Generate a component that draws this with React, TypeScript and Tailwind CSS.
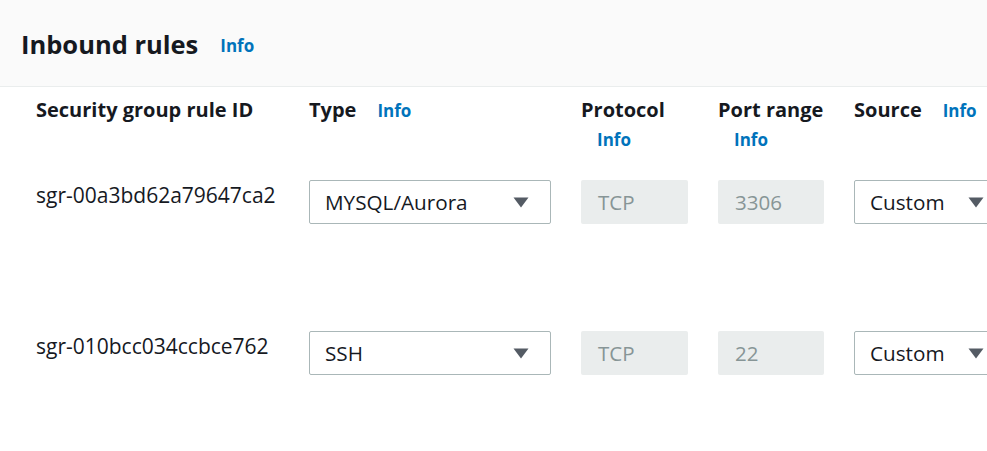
const rules = [
  { id: 'sgr-00a3bd62a79647ca2', type: 'MYSQL/Aurora', protocol: 'TCP', port: '3306', source: 'Custom' },
  { id: 'sgr-010bcc034ccbce762', type: 'SSH', protocol: 'TCP', port: '22', source: 'Custom' },
]

function Caret() {
  return (
    <svg width="16" height="11" viewBox="0 0 16 11" className="shrink-0">
      <path d="M0.5 0.5 L15.5 0.5 L8 10.5 Z" fill="#545b64" />
    </svg>
  )
}

function Info() {
  return <span className="pl-4 text-[17px] font-bold text-[#0073bb]">Info</span>
}

function Select({ value, width }: { value: string; width: string }) {
  return (
    <div className={`flex h-[44px] ${width} shrink-0 items-center justify-between rounded-[2px] border border-[#aab7b8] bg-white pl-[15px] pr-[21px] text-[20.7px]`}>
      <span>{value}</span>
      <Caret />
    </div>
  )
}

function Disabled({ value }: { value: string }) {
  return (
    <div className="flex h-[44px] items-center rounded-[2px] bg-[#eaeded] pl-[17px] text-[20.5px] text-[#879596]">
      {value}
    </div>
  )
}

export default function App() {
  return (
    <div
      className="h-[451px] w-[987px] overflow-hidden bg-white text-[20px] text-[#16191f]"
      style={{ fontFamily: '"Open Sans", "Noto Sans", Arial, sans-serif' }}
    >
      <header className="flex h-[87px] items-center border-b border-[#eaeded] bg-[#fafafa] pl-[21px] pt-[2px]">
        <h1 className="text-[25.5px] font-bold">Inbound rules</h1>
        <span className="pl-[22px] pt-[4px] text-[17px] font-bold text-[#0073bb]">Info</span>
      </header>

      <div className="grid grid-cols-[243px_242px_107px_106px_152px] gap-x-[30px] pl-[36px] pt-[8px] leading-[30px]">
        <div className="font-bold">Security group rule ID</div>
        <div className="flex flex-wrap items-baseline gap-x-[5px] font-bold">
          <span>Type</span>
          <Info />
        </div>
        <div className="flex flex-wrap items-baseline gap-x-[5px] font-bold">
          <span>Protocol</span>
          <Info />
        </div>
        <div className="flex flex-wrap items-baseline gap-x-[5px] font-bold">
          <span className="whitespace-nowrap">Port range</span>
          <Info />
        </div>
        <div className="flex flex-nowrap items-baseline gap-x-[5px] font-bold">
          <span>Source</span>
          <Info />
        </div>

        {rules.map((r, i) => (
          <div key={i} className="contents">
            <div className={`text-[21px] ${i === 0 ? 'mt-[25px]' : 'mt-[107px]'}`}>{r.id}</div>
            <div className={`${i === 0 ? 'mt-[25px]' : 'mt-[107px]'}`}>
              <Select value={r.type} width="w-[242px]" />
            </div>
            <div className={`${i === 0 ? 'mt-[25px]' : 'mt-[107px]'}`}>
              <Disabled value={r.protocol} />
            </div>
            <div className={`${i === 0 ? 'mt-[25px]' : 'mt-[107px]'}`}>
              <Disabled value={r.port} />
            </div>
            <div className={`${i === 0 ? 'mt-[25px]' : 'mt-[107px]'}`}>
              <Select value={r.source} width="w-[152px]" />
            </div>
          </div>
        ))}
      </div>
    </div>
  )
}
